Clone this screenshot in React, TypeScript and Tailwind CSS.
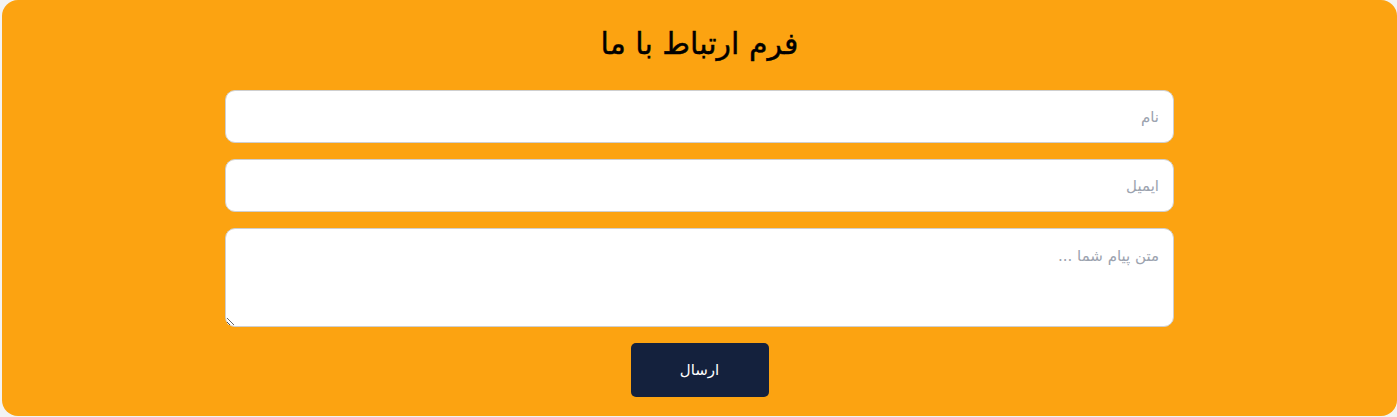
export default function App() {
  return (
    <div className="min-h-[417px] bg-[#f3f3f3] pl-[2px]" style={{ fontFamily: '"DejaVu Sans", "Noto Sans", sans-serif' }}>
      <form dir="rtl" className="w-[1395px] h-[416px] rounded-2xl bg-[#fca311] pt-[20px] flex flex-col items-center">
        <h1 className="text-[30px] leading-[48px] font-normal text-black mb-[22px] [-webkit-text-stroke:0.4px_black]">فرم ارتباط با ما</h1>
        <div className="w-[949px] flex flex-col gap-[16px]">
          <input
            type="text"
            placeholder="نام"
            className="h-[53px] w-full rounded-[10px] border border-[#cfcfcf] bg-white px-[14px] text-[15px] text-gray-800 placeholder:text-[#9ca3af] outline-none"
          />
          <input
            type="email"
            placeholder="ایمیل"
            className="h-[53px] w-full rounded-[10px] border border-[#cfcfcf] bg-white px-[14px] text-[15px] text-gray-800 placeholder:text-[#9ca3af] outline-none"
          />
          <textarea
            placeholder="متن پیام شما ..."
            className="h-[99px] w-full rounded-[10px] border border-[#cfcfcf] bg-white px-[14px] py-[16px] text-[15px] text-gray-800 placeholder:text-[#9ca3af] outline-none"
          />
        </div>
        <button
          type="button"
          className="mt-[16px] h-[54px] w-[138px] rounded-[5px] bg-[#14213d] text-[15px] font-medium text-white"
        >
          ارسال
        </button>
      </form>
    </div>
  )
}
